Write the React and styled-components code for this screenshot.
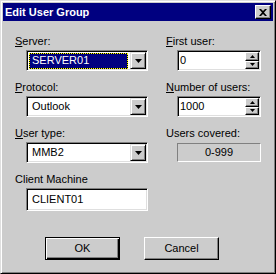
import React from 'react';
import styled, { createGlobalStyle } from 'styled-components';

const Global = createGlobalStyle`
  html, body { margin: 0; padding: 0; background: #cccccc; }
  body { font-family: "Liberation Sans", Arial, sans-serif; font-size: 11px; color: #000; }
  * { box-sizing: border-box; }
`;

const Window = styled.div`
  width: 276px;
  height: 274px;
  background: #cccccc;
  border: 1px solid;
  border-color: #dfdfdf #000 #000 #dfdfdf;
  box-shadow: inset 1px 1px #fff, inset -1px -1px #808080;
  padding: 2px;
  display: flex;
  flex-direction: column;
`;

const TitleBar = styled.div`
  height: 18px;
  background: #000080;
  display: flex;
  align-items: center;
  justify-content: space-between;
  padding: 0 2px 0 2px;
`;

const Title = styled.span`
  color: #fff;
  font-weight: bold;
  font-size: 11px;
  line-height: 13px;
`;

const CloseButton = styled.div`
  width: 16px;
  height: 14px;
  background: #cccccc;
  border: 1px solid;
  border-color: #fff #000 #000 #fff;
  box-shadow: inset -1px -1px #808080;
  display: flex;
  align-items: center;
  justify-content: center;
`;

const Body = styled.div`
  padding: 14px 0 0 12px;
  display: flex;
  flex-direction: column;
`;

const FieldGrid = styled.div`
  display: grid;
  grid-template-columns: 151px 94px;
  row-gap: 10px;
`;

const Field = styled.div`
  display: flex;
  flex-direction: column;
  gap: 2px;
`;

const Label = styled.div`
  height: 13px;
  line-height: 13px;
  white-space: nowrap;
  u { text-decoration: underline; text-underline-offset: 1px; }
`;

const Sunken = styled.div`
  margin-left: 11px;
  width: ${p => p.$w}px;
  height: ${p => p.$h || 21}px;
  border: 1px solid;
  border-color: #808080 #fff #fff #808080;
  box-shadow: inset 1px 1px #000, inset -1px -1px #dfdfdf;
  background: #fff;
  padding: 1px;
  display: flex;
  align-items: stretch;
`;

const Value = styled.div`
  flex: 1;
  display: flex;
  align-items: center;
  padding: 0 1px 0 ${p => (p.$tight ? 0 : 1)}px;
  margin-right: 1px;
`;

const ValueText = styled.span`
  flex: 1;
  height: ${p => (p.$selected ? 16 : 15)}px;
  display: flex;
  align-items: center;
  padding: 0 ${p => (p.$tight ? 0 : 2)}px;
  border: 1px dotted ${p => (p.$selected ? '#ffff00' : 'transparent')};
  background: ${p =>
    p.$selected
      ? 'linear-gradient(#000080,#000080) padding-box, linear-gradient(#000,#000) border-box'
      : 'transparent'};
  color: ${p => (p.$selected ? '#fff' : '#000')};
  line-height: 13px;
`;

const DropButton = styled.div`
  width: 16px;
  background: #cccccc;
  border: 1px solid;
  border-color: #dfdfdf #000 #000 #dfdfdf;
  box-shadow: inset 1px 1px #fff, inset -1px -1px #808080;
  display: flex;
  align-items: center;
  justify-content: center;
`;

const SpinColumn = styled.div`
  width: 14px;
  display: flex;
  flex-direction: column;
`;

const SpinButton = styled.div`
  flex: 1;
  background: #cccccc;
  border: 1px solid;
  border-color: #fff #000 #000 #fff;
  box-shadow: inset -1px -1px #808080;
  display: flex;
  align-items: center;
  justify-content: center;
`;

const StaticBox = styled.div`
  margin-left: 11px;
  margin-top: 1px;
  width: 84px;
  height: 19px;
  border: 1px solid;
  border-color: #808080 #fff #fff #808080;
  display: flex;
  align-items: center;
  justify-content: center;
  line-height: 13px;
`;

const ButtonRow = styled.div`
  display: flex;
  gap: 24px;
  margin-top: 26px;
  padding-left: 30px;
`;

const PushButton = styled.div`
  width: 75px;
  height: 23px;
  background: #cccccc;
  border: 1px solid;
  border-color: ${p => (p.$default ? '#000' : '#fff #000 #000 #fff')};
  box-shadow: ${p =>
    p.$default
      ? 'inset 1px 1px #fff, inset -1px -1px #000, inset -2px -2px #808080'
      : 'inset -1px -1px #808080'};
  display: flex;
  align-items: center;
  justify-content: center;
  line-height: 13px;
`;

const Arrow = ({ up, w = 7, h = 4 }) => (
  <svg width={w} height={h} viewBox={`0 0 ${w} ${h}`} style={{ display: 'block' }}>
    <polygon
      points={up ? `0,${h} ${w},${h} ${w / 2},0` : `0,0 ${w},0 ${w / 2},${h}`}
      fill="#000"
    />
  </svg>
);

const CloseIcon = () => (
  <svg width="8" height="7" viewBox="0 0 8 7" style={{ display: 'block' }}>
    <path d="M0 0h2l2 2 2-2h2L5 3.5 8 7H6L4 5 2 7H0l3-3.5z" fill="#000" />
  </svg>
);

const Combo = ({ value, selected }) => (
  <Sunken $w={122}>
    <Value>
      <ValueText $selected={selected}>{value}</ValueText>
    </Value>
    <DropButton>
      <Arrow />
    </DropButton>
  </Sunken>
);

const Spin = ({ value }) => (
  <Sunken $w={84}>
    <Value $tight>
      <ValueText $tight>{value}</ValueText>
    </Value>
    <SpinColumn>
      <SpinButton>
        <Arrow up w={5} h={3} />
      </SpinButton>
      <SpinButton>
        <Arrow w={5} h={3} />
      </SpinButton>
    </SpinColumn>
  </Sunken>
);

export default function App() {
  return (
    <>
      <Global />
      <Window>
        <TitleBar>
          <Title>Edit User Group</Title>
          <CloseButton>
            <CloseIcon />
          </CloseButton>
        </TitleBar>
        <Body>
          <FieldGrid>
            <Field>
              <Label><u>S</u>erver:</Label>
              <Combo value="SERVER01" selected />
            </Field>
            <Field>
              <Label><u>F</u>irst user:</Label>
              <Spin value="0" />
            </Field>
            <Field>
              <Label><u>P</u>rotocol:</Label>
              <Combo value="Outlook" />
            </Field>
            <Field>
              <Label><u>N</u>umber of users:</Label>
              <Spin value="1000" />
            </Field>
            <Field>
              <Label><u>U</u>ser type:</Label>
              <Combo value="MMB2" />
            </Field>
            <Field>
              <Label>Users covered:</Label>
              <StaticBox>0-999</StaticBox>
            </Field>
            <Field>
              <Label>Client Machine</Label>
              <Sunken $w={122} $h={23}>
                <Value>
                  <ValueText>CLIENT01</ValueText>
                </Value>
              </Sunken>
            </Field>
          </FieldGrid>
          <ButtonRow>
            <PushButton $default>OK</PushButton>
            <PushButton>Cancel</PushButton>
          </ButtonRow>
        </Body>
      </Window>
    </>
  );
}
